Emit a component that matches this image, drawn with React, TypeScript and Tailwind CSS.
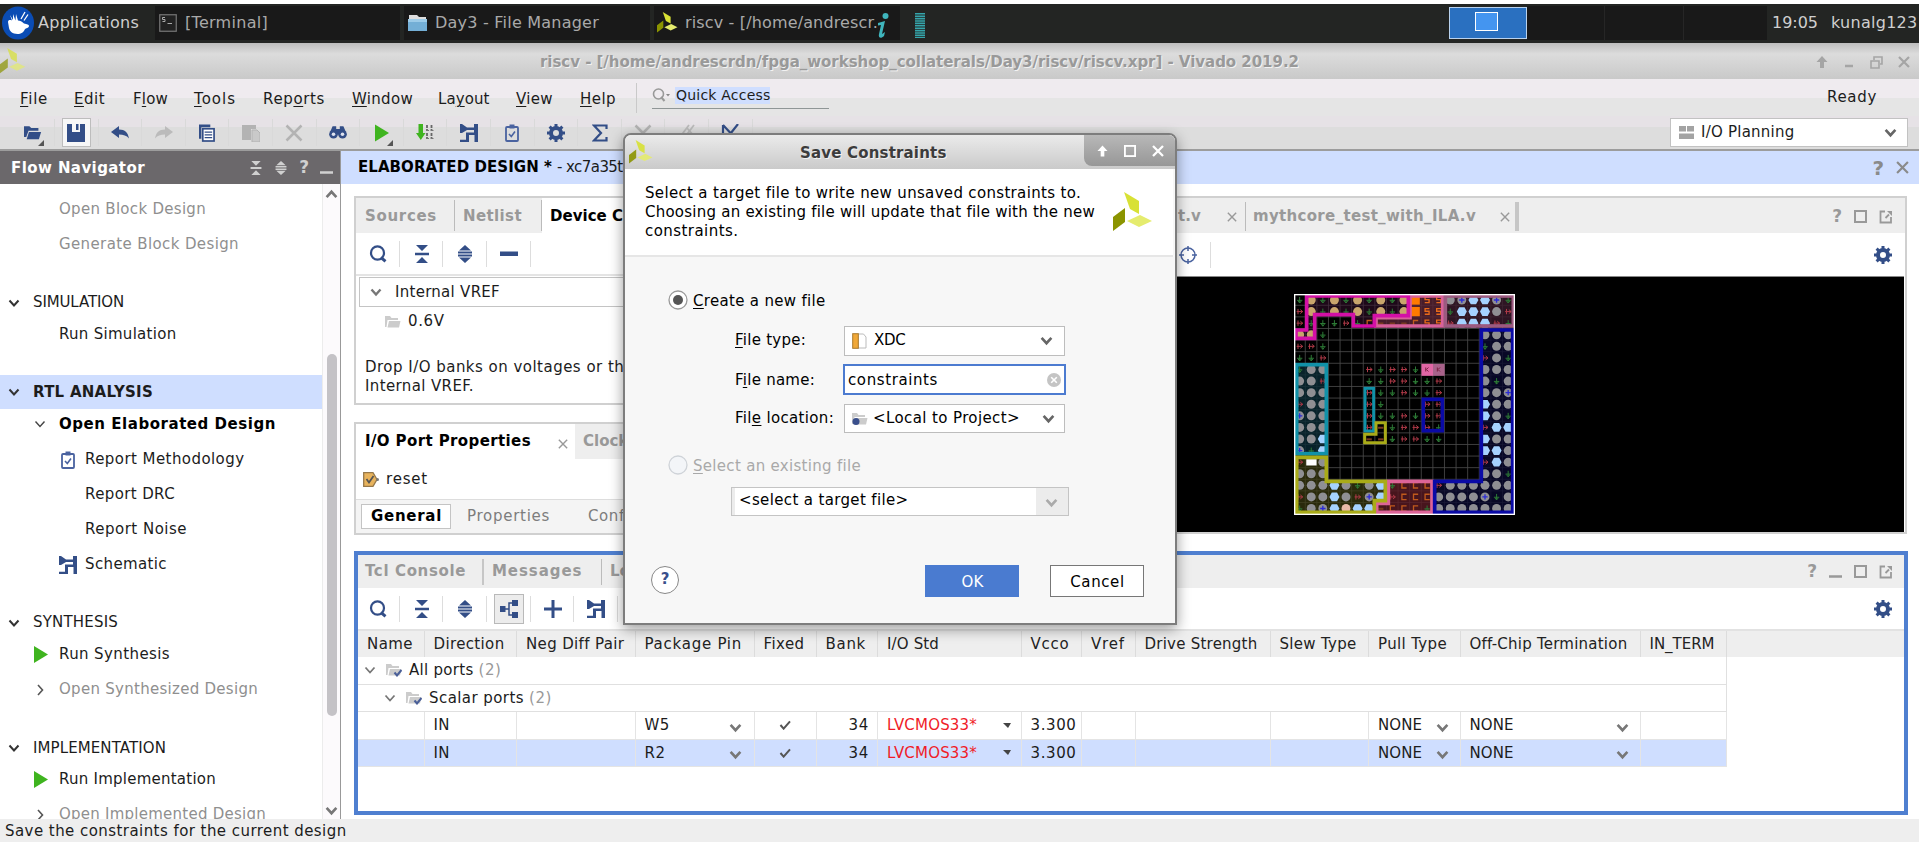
import { useLayoutEffect, useRef, useState, type ReactNode } from "react";

const NAVY = "#334e87";

/** Single-line label whose tracking is fitted to a given ink width. */
function T({ w, c = "", children }: { w?: number; c?: string; children: ReactNode }) {
  const ref = useRef<HTMLSpanElement>(null);
  const [ls, setLs] = useState(0);
  useLayoutEffect(() => {
    const el = ref.current;
    if (!el || !w) return;
    const n = (el.textContent || "").length;
    el.style.letterSpacing = "0px";
    const fitted = (w + 2 - el.getBoundingClientRect().width) / n;
    el.style.letterSpacing = `${fitted}px`;
    setLs(fitted);
  }, [w]);
  return (
    <span className={`shrink-0 pl-px whitespace-pre ${c}`}>
      <span ref={ref} style={{ letterSpacing: `${ls}px` }}>{children}</span>
    </span>
  );
}

const U = ({ children }: { children: ReactNode }) => (
  <span className="underline decoration-1 underline-offset-2">{children}</span>
);

/* ---------- icons ---------- */

function Chevron({ dir = "down", color = "#777", size = 12, sw = 2.4 }: { dir?: string; color?: string; size?: number; sw?: number }) {
  const d = dir === "down" ? "M1.5 3.5 L6 8.5 L10.5 3.5" : dir === "up" ? "M1.5 8.5 L6 3.5 L10.5 8.5" : "M4 1 L8.5 6 L4 11";
  return (
    <svg width={size} height={size} viewBox="0 0 12 12" className="shrink-0" fill="none" stroke={color} strokeWidth={sw}>
      <path d={d} />
    </svg>
  );
}

const Play = ({ w = 14, h = 17 }: { w?: number; h?: number }) => (
  <svg width={w} height={h} viewBox="0 0 14 17" className="shrink-0"><path d="M0 0 L14 8.5 L0 17z" fill="#3fb41f" /></svg>
);

function Logo({ size, c = "" }: { size: number; c?: string }) {
  return (
    <svg width={size} height={size} viewBox="0 0 40 40" className={`shrink-0 ${c}`}>
      <path d="M11 0 L26 9 L26 22 L17 17z" fill="#d8e135" />
      <path d="M12 16 L12 30 L0 39 L0 25z" fill="#8b9400" />
      <path d="M14 29 L27 23 L39 29 L26 35z" fill="#e5ec6e" />
    </svg>
  );
}

const Folder = ({ color = "#ccc", dot = "" }: { color?: string; dot?: string }) => (
  <svg width="16" height="14" viewBox="0 0 16 14" className="shrink-0">
    <path d="M0 1h5l1.5 2H13v2H2.5L1.5 12H0z" fill={color} />
    <path d="M4 6h11.5L14 12.5H2.5z" fill={color} />
    {dot === "check" && <path d="M8.5 9.5l2.500 3 4.500-5.500" fill="none" stroke="#4a5f98" strokeWidth="2" />}
    {dot === "dot" && <circle cx="4" cy="9.500" r="3.500" fill="#3a4f8c" />}
  </svg>
);

const Search = () => (
  <svg width="18" height="18" viewBox="0 0 18 18" fill="none" stroke={NAVY}>
    <ellipse cx="8.500" cy="8" rx="6.500" ry="6.700" strokeWidth="2.200" /><path d="M12 12.500l4.500 3.800" strokeWidth="3" />
  </svg>
);
const Collapse = ({ color = NAVY, s = 18 }: { color?: string; s?: number }) => (
  <svg width={s} height={s} viewBox="0 0 18 18" fill={color}><path d="M3 0h12L9 6zM2 7.700h14v2.600H2zM3 18h12L9 12z" /></svg>
);
const Expand = ({ color = NAVY, s = 18 }: { color?: string; s?: number }) => (
  <svg width={s} height={s} viewBox="0 0 18 18" fill={color}><path d="M3 5.500h12L9 0zM2 6.400h14v2H2zM2 9.600h14v2H2zM3 12.500h12L9 18z" /></svg>
);
const Minus = () => <svg width="18" height="18" viewBox="0 0 18 18"><path d="M0 6.500h18v4.500H0z" fill={NAVY} /></svg>;
const Plus = () => <svg width="18" height="18" viewBox="0 0 18 18"><path d="M7.500 0h3v7.500H18v3h-7.500V18h-3v-7.500H0v-3h7.500z" fill={NAVY} /></svg>;
const Tree = () => (
  <svg width="18" height="18" viewBox="0 0 18 18" fill={NAVY}>
    <path d="M0 6h5.500v6H0zM12 0h6v6h-6zM12 12h6v6h-6z" /><path d="M5 9h4M12 3H9v12h3" fill="none" stroke={NAVY} strokeWidth="1.500" />
  </svg>
);
const Schematic = () => (
  <svg width="18" height="18" viewBox="0 0 18 18" fill={NAVY}>
    <path d="M0 0h2l5 3.500h7V0h4v18h-3.500v-7H9v7H0v-2.200h6V8.500h8V6H7L2 9H0z" />
  </svg>
);
const Clip = () => (
  <svg width="14" height="18" viewBox="0 0 14 18" fill="none" stroke="#4a63a0">
    <rect x="1" y="3" width="12" height="14" rx="1" strokeWidth="1.800" /><path d="M4.500 2.500h5" strokeWidth="4" /><path d="M4 10l2.300 2.500L10 7.500" strokeWidth="1.600" />
  </svg>
);
const Gear = ({ s = 18 }: { s?: number }) => (
  <svg width={s} height={s} viewBox="0 0 18 18" className="shrink-0">
    <circle cx="9" cy="9" r="5" fill="none" stroke={NAVY} strokeWidth="4" />
    <path d="M9 0v3M9 15v3M0 9h3M15 9h3M2.600 2.600l2.200 2.200M13.200 13.200l2.200 2.200M2.600 15.400l2.200-2.200M13.200 4.800l2.200-2.200" stroke={NAVY} strokeWidth="3" />
  </svg>
);
const X = ({ s = 12, color = "#8a8a8a", sw = 2 }: { s?: number; color?: string; sw?: number }) => (
  <svg width={s} height={s} viewBox="0 0 12 12" className="shrink-0"><path d="M1 1l10 10M11 1L1 11" stroke={color} strokeWidth={sw} /></svg>
);
const Square = ({ color = "#999", s = 13 }: { color?: string; s?: number }) => (
  <svg width={s} height={s} viewBox="0 0 13 13" className="shrink-0"><rect x="1" y="1" width="11" height="11" fill="none" stroke={color} strokeWidth="2" /></svg>
);
const PopOut = () => (
  <svg width="14" height="14" viewBox="0 0 14 14" className="shrink-0" fill="none" stroke="#999" strokeWidth="1.800"><path d="M6 1.500H1.500v11h10.500V7M6.500 8L10 4.500" /><path d="M8 1h5v5z" fill="#999" stroke="none" /></svg>
);
const Underscore = ({ color = "#999" }: { color?: string }) => (
  <svg width="13" height="13" viewBox="0 0 13 13" className="shrink-0"><path d="M0 11.500h13" stroke={color} strokeWidth="2.500" /></svg>
);
const Q = ({ c = "text-[#999]" }: { c?: string }) => <span className={`text-[17px] leading-none font-bold ${c}`}>?</span>;
const Corner = () => <svg width="6" height="6" viewBox="0 0 6 6" className="absolute right-[10px] bottom-0"><path d="M6 0v6H0z" fill="#555" /></svg>;

const mainTools: ReactNode[] = [
  <><svg width="18" height="16" viewBox="0 0 20 17" fill={NAVY}><path d="M0 1h6l2 2h8v3H5L2.500 13H0z" /><path d="M5.500 7.500H19L16.500 15.500H3z" /></svg><Corner /></>,
  <div className="flex h-[29px] w-[29px] items-center justify-center border border-[#bdbdbd] bg-[#f7f7f7]">
    <svg width="18" height="18" viewBox="0 0 18 18" fill={NAVY}><path d="M0 0h5v8h8V0h5v18H0z" /><path d="M9 0h2.500v6H9z" /></svg>
  </div>,
  <svg width="18" height="13" viewBox="0 0 18 13"><path d="M0 6L8 0v3.500c6 0 9 3 10 9C15.500 9.500 12.500 8.500 8 8.500V12z" fill={NAVY} /></svg>,
  <svg width="18" height="13" viewBox="0 0 18 13"><path d="M18 6L10 0v3.500c-6 0-9 3-10 9C2.500 9.500 5.500 8.500 10 8.500V12z" fill="#bbb" /></svg>,
  <svg width="16" height="18" viewBox="0 0 17 18"><path d="M0 0h12v3H2.500v12H0z" fill={NAVY} /><rect x="4" y="4.500" width="12" height="13" fill="#fff" stroke={NAVY} strokeWidth="1.800" /><path d="M6 8h8M6 11h8M6 14h8" stroke={NAVY} strokeWidth="1.300" /></svg>,
  <svg width="18" height="18" viewBox="0 0 18 18" fill="#b3b3b3"><path d="M0 1h14v4H9v11H0z" /><path d="M10 6h5l3 3v9h-8z" fill="#c9c9c9" stroke="#b3b3b3" /></svg>,
  <X s={18} color="#b3b3b3" sw={1.7} />,
  <svg width="18" height="13" viewBox="0 0 20 14" fill={NAVY}><path d="M4 0h4v3h4V0h4l3 7v2H1V7z" /><circle cx="5" cy="9" r="4.800" /><circle cx="15" cy="9" r="4.800" /><circle cx="5" cy="9" r="2" fill="#dfe3ef" /><circle cx="15" cy="9" r="2" fill="#dfe3ef" /></svg>,
  <><Play w={14} h={18} /><Corner /></>,
  <svg width="18" height="17" viewBox="0 0 18 17"><path d="M2.500 0h4.500v9H9.500L4.800 16 0 9h2.500z" fill="#3fb41f" /><path d="M11 1v5M15.500 1v5M11 9v5M15.500 9v5" stroke="#666" strokeWidth="1.800" strokeDasharray="3 1" /><path d="M10 6.500h3M14.500 6.500h3M10 14.500h3M14.500 14.500h3" stroke="#777" /></svg>,
  <Schematic />,
  <Clip />,
  <Gear />,
  <svg width="16" height="18" viewBox="0 0 16 18" fill="none" stroke={NAVY} strokeWidth="2.200"><path d="M14.500 5V1.500H2L9 9l-7 7.500h12.500V13" /></svg>,
  <X s={18} color="#b3b3b3" sw={1.7} />,
  <svg width="16" height="18" viewBox="0 0 16 18" fill="none" stroke="#bbb" strokeWidth="1.800"><path d="M1 13L10 1M6 13L15 1M8 4l7 8" /></svg>,
  <svg width="18" height="18" viewBox="0 0 18 18" fill="none" stroke={NAVY} strokeWidth="2.200"><path d="M2 1v12M2 1l14 15M17 0L6 14" /></svg>,
];

/* ---------- device floorplan ---------- */

const device = [
  "gtgtgtgtgtosscbhhbg", "rtgtgtgtgtossghhhcr", "rggGrgC---CssrhhhrG", "ttg.............ccc", "rrg.............gcc",
  "ggr.............rcg", "gcc...rgrrgKK...ccc", "ccr...ggrrggr...cgc", "ccc...rggrggr...ccb", "rcc...rg...rr...hcc",
  "bcc...rggrgrr...hcg", "ccc...r-grrrg...rhh", "cch...--grrgg...hcc", "bgh.............hhc", "rwc.............rhc",
  "ccc.............ccg", "ccchcgchgCCCrcccccc", "rcchcrbhrCCCccccbgc", "gcbhphh-CCCgccccccc",
];

function Cell({ k, x, y }: { k: string; x: number; y: number }) {
  const K = k.toLowerCase();
  if (k === ".") return null;
  if (K === "g") return <path d={`M${x} ${y - 9}V${y + 9}M${x - 8} ${y + 1}H${x + 8}M${x - 5} ${y + 3}l5 6l5 -6`} stroke="#2c7a35" strokeWidth="3" fill="none" />;
  if (k === "r") return <path d={`M${x - 9} ${y}H${x + 9}M${x - 5} ${y - 8}V${y + 8}M${x + 2} ${y - 6}l7 6l-7 6`} stroke="#b03a48" strokeWidth="3" fill="none" />;
  if (k === "h") return <path d={`M${x - 15} ${y}l7 -13h16l7 13l-7 13h-16z`} fill="#a5d2ff" />;
  if (k === "o") return <rect x={x - 14} y={y - 14} width="27" height="28" fill="#ff7a00" />;
  if (k === "w") return <rect x={x - 15} y={y - 9} width="31" height="19" fill="#fff" />;
  if (k === "s") return <path d={`M${x + 7} ${y - 9}h-13v8h12v9h-13`} stroke="#e86a1a" strokeWidth="4" fill="none" />;
  if (k === "C") return <path d={`M${x + 8} ${y - 8}h-14v16h14`} stroke="#c05a1c" strokeWidth="4" fill="none" />;
  if (k === "-") return <path d={`M${x - 8} ${y + 1}h16`} stroke="#7a3a20" strokeWidth="6" />;
  if (k === "K") return <g><rect x={x - 17} y={y - 17} width="35" height="36" fill={x < 460 ? "#e066a4" : "#a8628a"} /><path d={`M${x - 4} ${y - 6}v12M${x + 4} ${y - 6}l-6 6l6 6`} stroke="#7a2040" strokeWidth="3" fill="none" /></g>;
  const fill = k === "t" ? "#c9a46c" : k === "p" ? "#e8b8a8" : "#8f8f93";
  return (
    <g>
      <circle cx={x} cy={y} r="13.500" fill={fill} />
      {k === "b" && <path d={`M${x - 8} ${y}h16M${x} ${y - 8}v16`} stroke="#2a2ad8" strokeWidth="4" />}
    </g>
  );
}

function Device() {
  const lines = Array.from({ length: 18 }, (_, i) => 34.800 * (i + 1));
  return (
    <svg width="221" height="221" viewBox="44 42 663 663" className="block">
      <rect x="44" y="42" width="663" height="663" fill="#000" />
      <g stroke="#4a4a4a" strokeWidth="2.500">
        {lines.map((v) => <path key={v} d={`M${43 + v} 44V702M46 ${41 + v}H704`} />)}
      </g>
      <path d="M82 48H387V107H285V138H222V104H106V175H50V150H82z" fill="#3a1030" fillOpacity=".5" />
      <path d="M390 48H490V138H290V113H392z" fill="#5a2434" fillOpacity=".8" />
      <rect x="498" y="48" width="204" height="90" fill="#3a1a2c" fillOpacity=".8" />
      <path d="M606 150H700V697H466V604H606z" fill="#0a0a30" fillOpacity=".8" />
      <rect x="52" y="254" width="89" height="267" fill="#0a2a34" fillOpacity=".8" />
      <path d="M52 532H141V604H318V662H285V697H52z" fill="#3a3a10" fillOpacity=".7" />
      <path d="M327 604H458V697H292V670H327z" fill="#5a1a24" fillOpacity=".8" />
      {device.map((row, j) => row.split("").map((k, i) => <Cell key={`${j}-${i}`} k={k} x={61 + i * 34.750} y={60 + j * 34.750} />))}
      <g fill="none" strokeWidth="11">
        <path d="M392 48H490V138H290V113H392z" stroke="#d8619a" />
        <rect x="498" y="48" width="204" height="90" stroke="#9c5a80" />
        <path d="M82 48H387V107H285V138H222V104H106V175H50V150H82z" stroke="#d310a6" />
        <path d="M327 604H458V697H292V670H327z" stroke="#dd6498" />
        <path d="M606 150H700V697H466V604H606z" stroke="#0a0aa6" />
        <rect x="432" y="358" width="57" height="94" stroke="#0a0aa6" />
        <rect x="52" y="254" width="89" height="267" stroke="#1191a8" />
        <rect x="257" y="325" width="26" height="128" stroke="#1191a8" strokeWidth="9" />
        <path d="M52 532H141V604H318V662H285V697H52z" stroke="#a9ab18" />
        <path d="M256 463H290V428H318V488H256z" stroke="#a9ab18" strokeWidth="9" />
      </g>
      <rect x="46" y="44" width="659" height="659" fill="none" stroke="#fff" strokeWidth="4" />
    </svg>
  );
}

/* ---------- desktop panel ---------- */

function Taskbar() {
  return (
    <div className="flex h-[43px] shrink-0 flex-col border-t-4 border-white bg-[#232523]">
      <div className="flex h-[37px] items-center text-[16px] text-[#a9a9a9]">
        <div className="flex w-[155px] shrink-0 items-center text-[#cfcfcf]">
          <svg width="33" height="34" viewBox="0 0 33 34" className="ml-[2px] shrink-0">
            <ellipse cx="16" cy="17" rx="16" ry="16.500" fill="#0a4cb4" />
            <path d="M6 16c0-2 2-2.500 4-1.500L8 9l3 5 0-6 2.500 6.500L14 8l2 6.500c2 0 4 1 6 3 3 1 5 1 5 2.500s-2 2-4 3c-1 3-4 5-7.500 5-5 0-8-3-8.500-6z" fill="#fff" />
            <path d="M19 13l4-7M22 14.500l4-6" stroke="#fff" strokeWidth="1.300" />
          </svg>
          <T w={99} c="ml-[2px]">Applications</T>
        </div>
        <div className="flex h-[34px] w-[245px] shrink-0 items-center bg-[#191919]">
          <svg width="18" height="18" viewBox="0 0 18 18" className="ml-[4px]"><rect x=".75" y=".75" width="16.500" height="16.500" fill="#222" stroke="#777" strokeWidth="1.200" /><path d="M6 3.500H3.500V5.500H6V7.500H3.500M8.500 9.500h4.500" stroke="#aaa" fill="none" /></svg>
          <T w={81} c="ml-[7px]">[Terminal]</T>
        </div>
        <div className="ml-[4px] flex h-[34px] w-[246px] shrink-0 items-center bg-[#191919]">
          <svg width="19" height="17" viewBox="0 0 19 17" className="ml-[4px]"><path d="M1 1h8l2 2h7v6H1z" fill="#ddd" /><path d="M0 5h19v12H0z" fill="#74afd6" /><path d="M0 5h19v3H0z" fill="#9ccbe8" /></svg>
          <T w={162} c="ml-[7px]">Day3 - File Manager</T>
        </div>
        <div className="ml-[4px] flex h-[34px] w-[246px] shrink-0 items-center bg-[#191919]">
          <Logo size={21} c="ml-[3px]" />
          <T w={191} c="ml-[6px]">riscv - [/home/andrescr.</T>
          <svg width="14" height="26" viewBox="0 0 14 26" className="mt-[6px] -ml-[2px] shrink-0"><circle cx="9.500" cy="3" r="3" fill="#3fb5bd" /><path d="M2 10l7-2-3 13 3-2-1 4c-3 3-6 2-5-2l2-9-3 .5z" fill="#3fb5bd" /></svg>
        </div>
        <svg width="10" height="25" viewBox="0 0 10 25" className="ml-[15px] mt-[6px] shrink-0"><path d="M5 0V25" stroke="#35a5ab" strokeWidth="10" strokeDasharray="1.600 .8" /></svg>
        <div className="ml-auto flex h-[32px] w-[78px] justify-center border border-[#b9d2ee] bg-[#2a70c0] pt-[4px] pr-[4px]">
          <div className="h-[19px] w-[23px] border border-white bg-[#4495f0]" />
        </div>
        <div className="flex h-[34px] w-[240px] bg-[#191919]">
          <div className="w-[78px] border-r border-[#262626]" /><div className="w-[79px] border-r border-[#262626]" />
        </div>
        <div className="flex w-[152px] shrink-0 text-[#cfcfcf]"><T w={44} c="ml-[4px] w-[59px]">19:05</T><T w={84.500}>kunalg123</T></div>
      </div>
    </div>
  );
}

function TitleBar() {
  return (
    <div className="flex h-[36px] shrink-0 items-center bg-linear-to-b from-[#bdbdbd] via-[#dcdcdc] via-30% to-[#c9c9c9]">
      <Logo size={26} c="opacity-70" />
      <T w={757} c="ml-[513px] pt-[3px] font-bold text-[#999] [text-shadow:1px_1px_0_#f2f2f2]">riscv - [/home/andrescrdn/fpga_workshop_collaterals/Day3/riscv/riscv.xpr] - Vivado 2019.2</T>
      <div className="mr-[9px] ml-auto flex items-center gap-[15px] pt-[2px]">
        <svg width="12" height="12" viewBox="0 0 12 12"><path d="M6 0l5.500 6H8v6H4V6H.5z" fill="#a5a5a5" /></svg>
        <svg width="12" height="12" viewBox="0 0 12 12"><path d="M2 10h8" stroke="#a5a5a5" strokeWidth="2.500" /></svg>
        <svg width="13" height="13" viewBox="0 0 13 13" fill="none" stroke="#a5a5a5" strokeWidth="1.600"><path d="M1 5h8v7H1zM4 4V1h8v7h-2" /></svg>
        <X s={12} color="#a5a5a5" sw={2.200} />
      </div>
    </div>
  );
}

function MenuAndTools() {
  return (
    <div className="flex h-[72px] shrink-0 border-b-2 border-[#9c9c9c] bg-[linear-gradient(#efebef_0_19px,#e5e5e5_19px_37px,#e6e2e6_37px_48px,#dddddd_48px)]">
      <div className="flex w-[760px] shrink-0 flex-col">
        <div className="flex h-[39px] items-center">
          <div className="flex w-[616px] shrink-0 pt-[2px] pl-[19px]">
            <T w={26} c="w-[54px]"><U>F</U>ile</T><T w={29} c="w-[59px]"><U>E</U>dit</T><T w={33} c="w-[61px]">F<U>l</U>ow</T><T w={40} c="w-[69px]"><U>T</U>ools</T>
            <T w={60} c="w-[89px]">Rep<U>o</U>rts</T><T w={59} c="w-[86px]"><U>W</U>indow</T><T w={49.500} c="w-[78px]">La<U>y</U>out</T><T w={35} c="w-[64px]"><U>V</U>iew</T><T w={34} c="w-[35px]"><U>H</U>elp</T>
          </div>
          <div className="mt-[-1px] ml-[20px] h-[30px] border-l border-[#c9c9c9]" />
          <div className="mt-[-6px] ml-[15px] flex h-[27px] w-[177px] shrink-0 items-center border-b border-[#8f9696]">
            <svg width="18" height="14" viewBox="0 0 18 14"><ellipse cx="6.500" cy="6" rx="5" ry="5" fill="none" stroke="#999" strokeWidth="1.600" /><path d="M9 9l3.500 4" stroke="#999" strokeWidth="2" /><path d="M14 6h4l-2 2.500z" fill="#888" /></svg>
            <span className="ml-[5px] flex h-[17px] w-[95px] items-center bg-[#cfdeff] text-[14px]"><T w={92.500}>Quick Access</T></span>
          </div>
        </div>
        <div className="flex h-[29px] items-center pl-[11.500px]">
          {mainTools.map((t, i) => (
            <div key={i} className="relative flex h-[27px] w-[43.600px] shrink-0 items-center justify-center border-r border-[#d9d9d9]">{t}</div>
          ))}
        </div>
      </div>
      <div className="ml-auto flex w-[249px] flex-col">
        <div className="flex h-[39px] items-center"><T w={48} c="mt-[-3px] ml-[156px]">Ready</T></div>
        <div className="flex h-[29px] w-[238px] items-center border border-[#c2c2c2] bg-white">
          <svg width="15" height="13" viewBox="0 0 15 13" className="ml-[8px] shrink-0" fill="#a3a3a3"><path d="M0 0h7v5.500H0zM8 0h7v5.500H8zM0 7.500h15V13H0z" /></svg>
          <T w={91.500} c="ml-[6px]">I/O Planning</T>
          <div className="mr-[10px] ml-auto"><Chevron size={13} color="#666" /></div>
        </div>
      </div>
    </div>
  );
}

/* ---------- flow navigator ---------- */

function Sec({ c, w, children }: { c: string; w: number; children: ReactNode }) {
  return (
    <div className={`flex shrink-0 items-center pl-[8px] ${c}`}>
      <Chevron color="#333" sw={2} /><T w={w} c="ml-[12px]">{children}</T>
    </div>
  );
}
function Item({ c, w, icon, children }: { c: string; w: number; icon?: ReactNode; children: ReactNode }) {
  return (
    <div className={`flex shrink-0 items-center ${c}`}>
      <span className="flex w-[24px] shrink-0 justify-center">{icon}</span><T w={w}>{children}</T>
    </div>
  );
}

function FlowNavigator() {
  return (
    <div className="flex w-[341px] shrink-0 flex-col border-r border-[#999] bg-white">
      <div className="flex h-[33px] shrink-0 items-center bg-[#6b686b] font-bold text-white">
        <T w={132} c="ml-[10px] pt-[2px]">Flow Navigator</T>
        <div className="mr-[7px] ml-auto flex items-center gap-[11px]">
          <Collapse color="#d0d0d0" s={14} /><Expand color="#d0d0d0" s={14} /><Q c="text-[#d0d0d0]" /><Underscore color="#d0d0d0" />
        </div>
      </div>
      <div className="flex min-h-0 flex-1">
        <div className="flex w-[322px] flex-col overflow-hidden pt-[8px]">
          <Item c="h-[35px] pl-[34px] text-[#8f8f8f]" w={145}>Open Block Design</Item>
          <Item c="h-[35px] pl-[34px] text-[#8f8f8f]" w={178}>Generate Block Design</Item>
          <Sec c="mt-[24px] h-[33px]" w={89}>SIMULATION</Sec>
          <Item c="h-[30px] pl-[34px]" w={115.500}>Run Simulation</Item>
          <Sec c="mt-[26px] h-[34px] bg-[#cfdeff] font-bold" w={118}>RTL ANALYSIS</Sec>
          <Item c="h-[30px] pl-[34px] font-bold text-black" w={215} icon={<span className="mr-[13px]"><Chevron sw={1.400} color="#444" /></span>}>Open Elaborated Design</Item>
          <Item c="mt-[3px] h-[35px] pl-[60px]" w={157.500} icon={<span className="mr-[8px]"><Clip /></span>}>Report Methodology</Item>
          <Item c="h-[35px] pl-[60px]" w={88}>Report DRC</Item>
          <Item c="h-[35px] pl-[60px]" w={100}>Report Noise</Item>
          <Item c="h-[35px] pl-[60px]" w={80} icon={<span className="mr-[8px]"><Schematic /></span>}>Schematic</Item>
          <Sec c="mt-[23px] h-[35px]" w={83}>SYNTHESIS</Sec>
          <Item c="h-[29px] pl-[34px]" w={109} icon={<span className="mr-[10px]"><Play /></span>}>Run Synthesis</Item>
          <Item c="mt-[3px] h-[35px] pl-[34px] text-[#8f8f8f]" w={197} icon={<span className="mr-[12px]"><Chevron dir="right" sw={1.600} color="#555" /></span>}>Open Synthesized Design</Item>
          <Sec c="mt-[24px] h-[34px]" w={131}>IMPLEMENTATION</Sec>
          <Item c="h-[29px] pl-[34px]" w={155} icon={<span className="mr-[10px]"><Play /></span>}>Run Implementation</Item>
          <Item c="mt-[3px] h-[35px] pl-[34px] text-[#8f8f8f]" w={205} icon={<span className="mr-[12px]"><Chevron dir="right" sw={1.600} color="#555" /></span>}>Open Implemented Design</Item>
        </div>
        <div className="flex flex-1 flex-col items-center border-l border-[#ececec] bg-[#fcfafc] pt-[4px] pb-[2px]">
          <Chevron dir="up" size={13} />
          <div className="mt-[153px] h-[362px] w-[10px] rounded-full bg-[#c4c2c6]" />
          <div className="mt-auto"><Chevron size={13} /></div>
        </div>
      </div>
    </div>
  );
}

/* ---------- workspace panels ---------- */

const Tool = ({ on, children }: { on?: boolean; children: ReactNode }) => (
  <div className="flex w-[43.700px] shrink-0 items-center justify-center">
    <div className={on ? "flex h-[30px] w-[30px] items-center justify-center border border-[#b9b9b9] bg-[#ececec]" : "flex"}>{children}</div>
  </div>
);
const Sep = () => <div className="-ml-px h-[26px] w-px shrink-0 bg-[#ddd]" />;

function ConstraintsPanel() {
  return (
    <div className="flex h-[209px] w-[320px] flex-col border-2 border-[#d0d0d0] bg-white">
      <div className="flex h-[35px] shrink-0 bg-[#eee] pl-[8px] font-bold text-[#999]">
        <div className="my-[2px] flex w-[91px] shrink-0 items-center border-r border-[#bbb] pt-[2px]"><T w={70}>Sources</T></div>
        <div className="my-[2px] flex w-[87px] shrink-0 items-center border-r border-[#bbb] pt-[2px] pl-[7px]"><T w={57}>Netlist</T></div>
        <div className="flex flex-1 items-center bg-white pt-[2px] pl-[7px] text-black"><T w={158}>Device Constraints</T></div>
      </div>
      <div className="flex h-[43px] shrink-0 items-center border-b-2 border-[#e4e4e4]">
        <Tool><Search /></Tool><Sep /><Tool><Collapse /></Tool><Sep /><Tool><Expand /></Tool><Sep /><Tool><Minus /></Tool><Sep />
      </div>
      <div className="mt-[1px] ml-[3px] flex h-[30px] shrink-0 items-center border border-[#c4c4c4] pl-[10px]">
        <Chevron /><T w={103} c="ml-[12px]">Internal VREF</T>
      </div>
      <div className="flex h-[29px] shrink-0 items-center pl-[29px]"><Folder /><T w={34.500} c="ml-[6px]">0.6V</T></div>
      <div className="mt-[22px] flex flex-col pl-[8px] leading-[19px]">
        <T w={267}>Drop I/O banks on voltages or the</T><T w={107}>Internal VREF.</T>
      </div>
    </div>
  );
}

function PortPropsPanel() {
  return (
    <div className="mt-[17px] flex h-[113px] w-[320px] flex-col border-2 border-[#d0d0d0] bg-white">
      <div className="flex h-[35px] shrink-0 bg-[#eee] font-bold">
        <div className="flex w-[219px] shrink-0 items-center bg-white pl-[8px] text-black"><T w={164}>I/O Port Properties</T><span className="ml-[27px] pt-1"><X s={10} color="#999" sw={1.700} /></span></div>
        <div className="flex items-center pl-[7px] text-[#999]"><T>Clock</T></div>
      </div>
      <div className="flex h-[41px] shrink-0 items-center border-b border-[#ddd] pl-[7px]">
        <svg width="16" height="15" viewBox="0 0 16 15"><path d="M.7.7H10L14 7.500L10 14.300H.7z" fill="#e8b35c" stroke="#96784a" strokeWidth="1.300" /><path d="M3.500 7l2.500 3.500L10.500 4" fill="none" stroke="#555" strokeWidth="1.800" /><circle cx="14.500" cy="7.500" r="1.500" fill="#777" /></svg>
        <T w={40} c="ml-[6px]">reset</T>
      </div>
      <div className="flex min-h-0 flex-1 items-center bg-[#f4f4f4] pl-[5px] text-[#7d7d7d]">
        <div className="flex h-[25px] w-[90px] shrink-0 items-center border border-[#c4c4c4] bg-white pl-[8px] font-bold text-black"><T w={69}>General</T></div>
        <T w={81} c="ml-[15px]">Properties</T><T w={76} c="ml-[37px]">Configure</T>
      </div>
    </div>
  );
}

function DevicePanel() {
  return (
    <div className="flex h-[338px] w-[1219px] flex-col border-2 border-[#d0d0d0] bg-white">
      <div className="flex h-[35px] shrink-0 items-center bg-[#eee] pt-[2px] font-bold text-[#999]">
        <T w={21} c="ml-[487px] w-[50px]">t.v</T><X s={10} color="#999" sw={1.700} />
        <div className="ml-[8px] h-[29px] w-px bg-[#bbb]" />
        <T w={221} c="ml-[6px]">mythcore_test_with_ILA.v</T><span className="ml-[24px] pt-px"><X s={10} color="#999" sw={1.700} /></span>
        <div className="ml-[5px] h-[29px] w-[4px] bg-[#c6c6c6]" />
        <div className="mr-[12px] ml-auto flex items-center gap-[12px]"><Q /><Square /><PopOut /></div>
      </div>
      <div className="flex h-[43px] shrink-0 items-center">
        <svg width="18" height="18" viewBox="0 0 18 18" className="ml-[489px]" fill="none" stroke="#4a63a0" strokeWidth="1.500"><circle cx="9" cy="9" r="7" /><path d="M9 0v5M9 13v5M0 9h5M13 9h5" /></svg>
        <div className="ml-[13px] h-[26px] w-px bg-[#ddd]" />
        <div className="mr-[13px] ml-auto"><Gear /></div>
      </div>
      <div className="mr-[1px] flex h-[256px] shrink-0 justify-end border-t border-[#888] bg-black pt-[17px] pr-[389px]"><Device /></div>
    </div>
  );
}

const cols: { h: string; w: number; c: string }[] = [
  { h: "Name", w: 44, c: "w-[66.500px]" }, { h: "Direction", w: 69, c: "w-[92.500px]" }, { h: "Neg Diff Pair", w: 96, c: "w-[118.500px]" },
  { h: "Package Pin", w: 95.500, c: "w-[119px]" }, { h: "Fixed", w: 39, c: "w-[62px]" }, { h: "Bank", w: 38.500, c: "w-[61.500px]" },
  { h: "I/O Std", w: 50, c: "w-[143.500px]" }, { h: "Vcco", w: 37, c: "w-[60.500px]" }, { h: "Vref", w: 32, c: "w-[53.500px]" },
  { h: "Drive Strength", w: 111, c: "w-[135px]" }, { h: "Slew Type", w: 75, c: "w-[98.500px]" }, { h: "Pull Type", w: 67, c: "w-[91.500px]" },
  { h: "Off-Chip Termination", w: 156.500, c: "w-[180px]" }, { h: "IN_TERM", w: 63, c: "w-[86.500px]" },
];

function PortRow({ pin, pw, sel }: { pin: string; pw: number; sel?: boolean }) {
  const chev = (c: string) => <span className={`ml-auto ${c}`}><Chevron size={13} /></span>;
  const cell: ReactNode[] = [
    null, <T w={14.500}>IN</T>, null,
    <><T w={pw}>{pin}</T>{chev("mr-[12px] mt-1")}</>,
    <svg width="12" height="10" viewBox="0 0 13 11" className="ml-[16px]"><path d="M1.500 5.500L5 9.500L12 1.500" fill="none" stroke="#555" strokeWidth="2.200" /></svg>,
    <T w={18.500} c="ml-[23px]">34</T>,
    <><span className="text-[#f01c28]"><T w={88}>LVCMOS33*</T></span><svg width="8" height="5" viewBox="0 0 8 5" className="mr-[10px] ml-auto"><path d="M0 0h8L5 5z" fill="#444" /></svg></>,
    <T w={44}>3.300</T>, null, null, null,
    <><T w={42}>NONE</T>{chev("mr-[11px] mt-1")}</>, <><T w={42}>NONE</T>{chev("mr-[11px] mt-1")}</>, null,
  ];
  return (
    <div className={`flex h-[27.500px] w-[1369px] ${sel ? "bg-[#cfdeff]" : ""}`}>
      {cols.map((c, i) => <div key={c.h} className={`flex shrink-0 items-center border-r border-b border-[#e4e4e4] pl-[8px] ${c.c}`}>{cell[i]}</div>)}
    </div>
  );
}

function PortsPanel() {
  return (
    <div className="mt-[16px] flex h-[264px] w-[1554px] flex-col border-4 border-[#4f7fd0] bg-white">
      <div className="flex h-[33px] shrink-0 items-center bg-[#eee] pl-[6px] font-bold text-[#999]">
        <div className="flex h-[26px] w-[120px] shrink-0 items-center border-r-2 border-[#c6c6c6]"><T w={99}>Tcl Console</T></div>
        <div className="flex h-[26px] w-[118px] shrink-0 items-center border-r border-[#bbb] pl-[7px]"><T w={88.500}>Messages</T></div>
        <T c="ml-[7px]">Log</T>
        <div className="mr-[11px] ml-auto flex items-center gap-[12px]"><Q /><Underscore /><Square /><PopOut /></div>
      </div>
      <div className="flex h-[43px] shrink-0 items-center border-b-2 border-[#e2e2e2]">
        <div className="-ml-[2px] flex items-center"><Tool><Search /></Tool><Sep /><Tool><Collapse /></Tool><Sep /><Tool><Expand /></Tool><Sep /><Tool on><Tree /></Tool><Sep /><Tool><Plus /></Tool><Sep /><Tool><Schematic /></Tool><Sep /></div>
        <div className="mr-[12px] ml-auto"><Gear /></div>
      </div>
      <div className="flex h-[26px] shrink-0 bg-[#eee] text-[#222]">
        {cols.map((c) => <div key={c.h} className={`flex shrink-0 items-center border-r border-[#dcdcdc] pt-px pl-[8px] ${c.c}`}><T w={c.w}>{c.h}</T></div>)}
      </div>
      <div className="flex h-[27.500px] w-[1369px] shrink-0 items-center border-r border-b border-[#e0e0e0] pl-[6px]">
        <Chevron sw={1.800} /><span className="ml-[10px] flex"><Folder dot="check" /></span><T w={62.500} c="ml-[6px]">All ports</T><T w={21} c="ml-[4px] text-[#999]">(2)</T>
      </div>
      <div className="flex h-[27.500px] w-[1369px] shrink-0 items-center border-r border-b border-[#e0e0e0] pl-[26px]">
        <Chevron sw={1.800} /><span className="ml-[10px] flex"><Folder dot="check" /></span><T w={93} c="ml-[6px]">Scalar ports</T><T w={21} c="ml-[4px] text-[#999]">(2)</T>
      </div>
      <PortRow pin="W5" pw={23} />
      <PortRow pin="R2" pw={19} sel />
    </div>
  );
}

/* ---------- dialog ---------- */

const Radio = ({ on }: { on?: boolean }) => (
  <svg width="20" height="20" viewBox="0 0 20 20" className="shrink-0">
    <circle cx="10" cy="10" r="9" fill={on ? "#fff" : "#f3f5f8"} stroke={on ? "#9a9a9a" : "#cfd3d8"} strokeWidth="1.300" />{on && <circle cx="10" cy="10" r="5" fill="#555" />}
  </svg>
);

function SaveDialog() {
  return (
    <div className="absolute top-[133px] left-[623px] flex h-[492px] w-[554px] flex-col overflow-hidden rounded-t-[8px] border-2 border-[#7d7d7d] bg-[#f7f7f7] text-black shadow-[0_4px_14px_rgba(0,0,0,.4)]">
      <div className="flex h-[34px] shrink-0 bg-linear-to-b from-[#ebebeb] to-[#cacaca]">
        <Logo size={24} c="mt-[5px] ml-[4px] opacity-90" />
        <div className="ml-[146px] flex items-center pt-[2px]"><T w={144.500} c="font-bold text-[#3c3c3c] [text-shadow:1px_1px_0_#f2f2f2]">Save Constraints</T></div>
        <div className="ml-auto flex h-[31px] w-[91px] items-center gap-[16px] rounded-bl-[8px] bg-linear-to-b from-[#b8b8b8] to-[#979797] pl-[13px]">
          <svg width="11" height="12" viewBox="0 0 12 12"><path d="M6 0l5.500 6H8v6H4V6H.5z" fill="#fff" /></svg>
          <Square color="#fff" s={12} /><X s={12} color="#fff" sw={2.300} />
        </div>
      </div>
      <div className="mr-[2px] flex h-[88px] shrink-0 border-b-2 border-[#e6e6e6] bg-white pl-[19px]">
        <div className="flex w-[469px] shrink-0 flex-col pt-[15px] leading-[19px]">
          <T w={434}>Select a target file to write new unsaved constraints to.</T>
          <T w={448}>Choosing an existing file will update that file with the new</T>
          <T w={91.500}>constraints.</T>
        </div>
        <Logo size={40} c="mt-[23px]" />
      </div>
      <div className="mt-[33px] flex h-[20px] shrink-0 items-center pl-[43px]"><Radio on /><T w={130.500} c="ml-[4px] pt-[2px]"><U>C</U>reate a new file</T></div>
      <div className="mt-[15px] flex h-[31px] shrink-0 items-center pl-[109px]">
        <div className="flex w-[110px] shrink-0"><T w={69}><U>F</U>ile type:</T></div>
        <div className="flex h-[30px] w-[221px] items-center border border-[#bdbdbd] bg-white">
          <svg width="15" height="16" viewBox="0 0 15 16" className="ml-[7px] shrink-0"><path d="M6 1h5.500L14 4v11H6z" fill="#fff" stroke="#bbb" /><rect x=".7" y=".7" width="5.600" height="14.600" fill="#f0a838" stroke="#a8792c" /></svg>
          <T w={29.500} c="ml-[6px]">XDC</T><span className="mr-[11px] ml-auto"><Chevron size={13} color="#666" /></span>
        </div>
      </div>
      <div className="mt-[8px] flex h-[31px] shrink-0 items-center pl-[109px]">
        <div className="flex w-[109px] shrink-0 pt-[2px]"><T w={78}>F<U>i</U>le name:</T></div>
        <div className="flex h-[31px] w-[223px] items-center border-2 border-[#4c7bd0] bg-white">
          <T w={88} c="ml-[2px] pt-px">constraints</T>
          <svg width="14" height="14" viewBox="0 0 14 14" className="mr-[3px] ml-auto"><circle cx="7" cy="7" r="7" fill="#c4c4c4" /><path d="M4.200 4.200l5.600 5.600M9.800 4.200l-5.600 5.600" stroke="#fff" strokeWidth="1.600" /></svg>
        </div>
      </div>
      <div className="mt-[9px] flex h-[29px] shrink-0 items-center pl-[109px]">
        <div className="flex w-[110px] shrink-0"><T w={97}>Fil<U>e</U> location:</T></div>
        <div className="flex h-[29px] w-[221px] items-center border border-[#bdbdbd] bg-white">
          <span className="ml-[7px] flex"><Folder dot="dot" /></span><T w={145} c="ml-[4px]">&lt;Local to Project&gt;</T><span className="mr-[9px] ml-auto"><Chevron size={13} color="#666" /></span>
        </div>
      </div>
      <div className="mt-[22px] flex h-[20px] shrink-0 items-center pl-[43px] text-[#a9a9a9]"><Radio /><T w={166} c="ml-[4px] pt-[2px]"><U>S</U>elect an existing file</T></div>
      <div className="mt-[12px] ml-[106px] flex h-[29px] w-[338px] shrink-0 border border-[#c4c4c4] bg-[#ececec] pl-[3px]">
        <div className="flex w-[301px] items-center bg-white pb-[3px] pl-[3px]"><T w={167.500}>&lt;select a target file&gt;</T></div>
        <span className="mt-[8px] ml-[9px]"><Chevron size={13} color="#aaa" /></span>
      </div>
      <div className="mt-[49px] flex h-[32px] shrink-0 items-center pl-[26px]">
        <div className="mt-[-3px] flex h-[28px] w-[28px] items-center justify-center rounded-full border-[1.500px] border-[#888] bg-white font-bold text-[#3a4f8c]">?</div>
        <div className="ml-[246px] flex h-[32px] w-[94px] items-center justify-center bg-[#4a7bd0] pt-[2px] text-white"><T w={20}>OK</T></div>
        <div className="ml-[31px] flex h-[32px] w-[94px] items-center justify-center border border-[#777] bg-white pt-[2px]"><T w={52.500}>Cancel</T></div>
      </div>
    </div>
  );
}

export default function App() {
  return (
    <div className="relative flex h-[842px] w-[1919px] flex-col overflow-hidden bg-white font-['DejaVu_Sans',sans-serif] text-[15px] leading-normal text-[#1c1c1c]">
      <Taskbar />
      <TitleBar />
      <MenuAndTools />
      <div className="flex h-[668px] shrink-0">
        <FlowNavigator />
        <div className="flex flex-1 flex-col">
          <div className="flex h-[33px] shrink-0 items-center bg-[#cfdeff] pl-[16px]">
            <T w={192} c="font-bold text-black">ELABORATED DESIGN *</T><T w={130} c="ml-[4px]">- xc7a35tcpg236-1</T>
            <div className="mr-[10px] ml-auto flex items-center gap-[12px]"><span className="text-[20px] leading-none font-bold text-[#8a8a8a]">?</span><X s={13} /></div>
          </div>
          <div className="flex flex-col pt-[12px] pl-[13px]">
            <div className="flex gap-[14px]">
              <div className="flex w-[320px] shrink-0 flex-col"><ConstraintsPanel /><PortPropsPanel /></div>
              <DevicePanel />
            </div>
            <PortsPanel />
          </div>
        </div>
      </div>
      <div className="flex h-[23px] shrink-0 items-center bg-[#eee] pt-px pl-[4px]"><T w={339.600}>Save the constraints for the current design</T></div>
      <SaveDialog />
    </div>
  );
}
